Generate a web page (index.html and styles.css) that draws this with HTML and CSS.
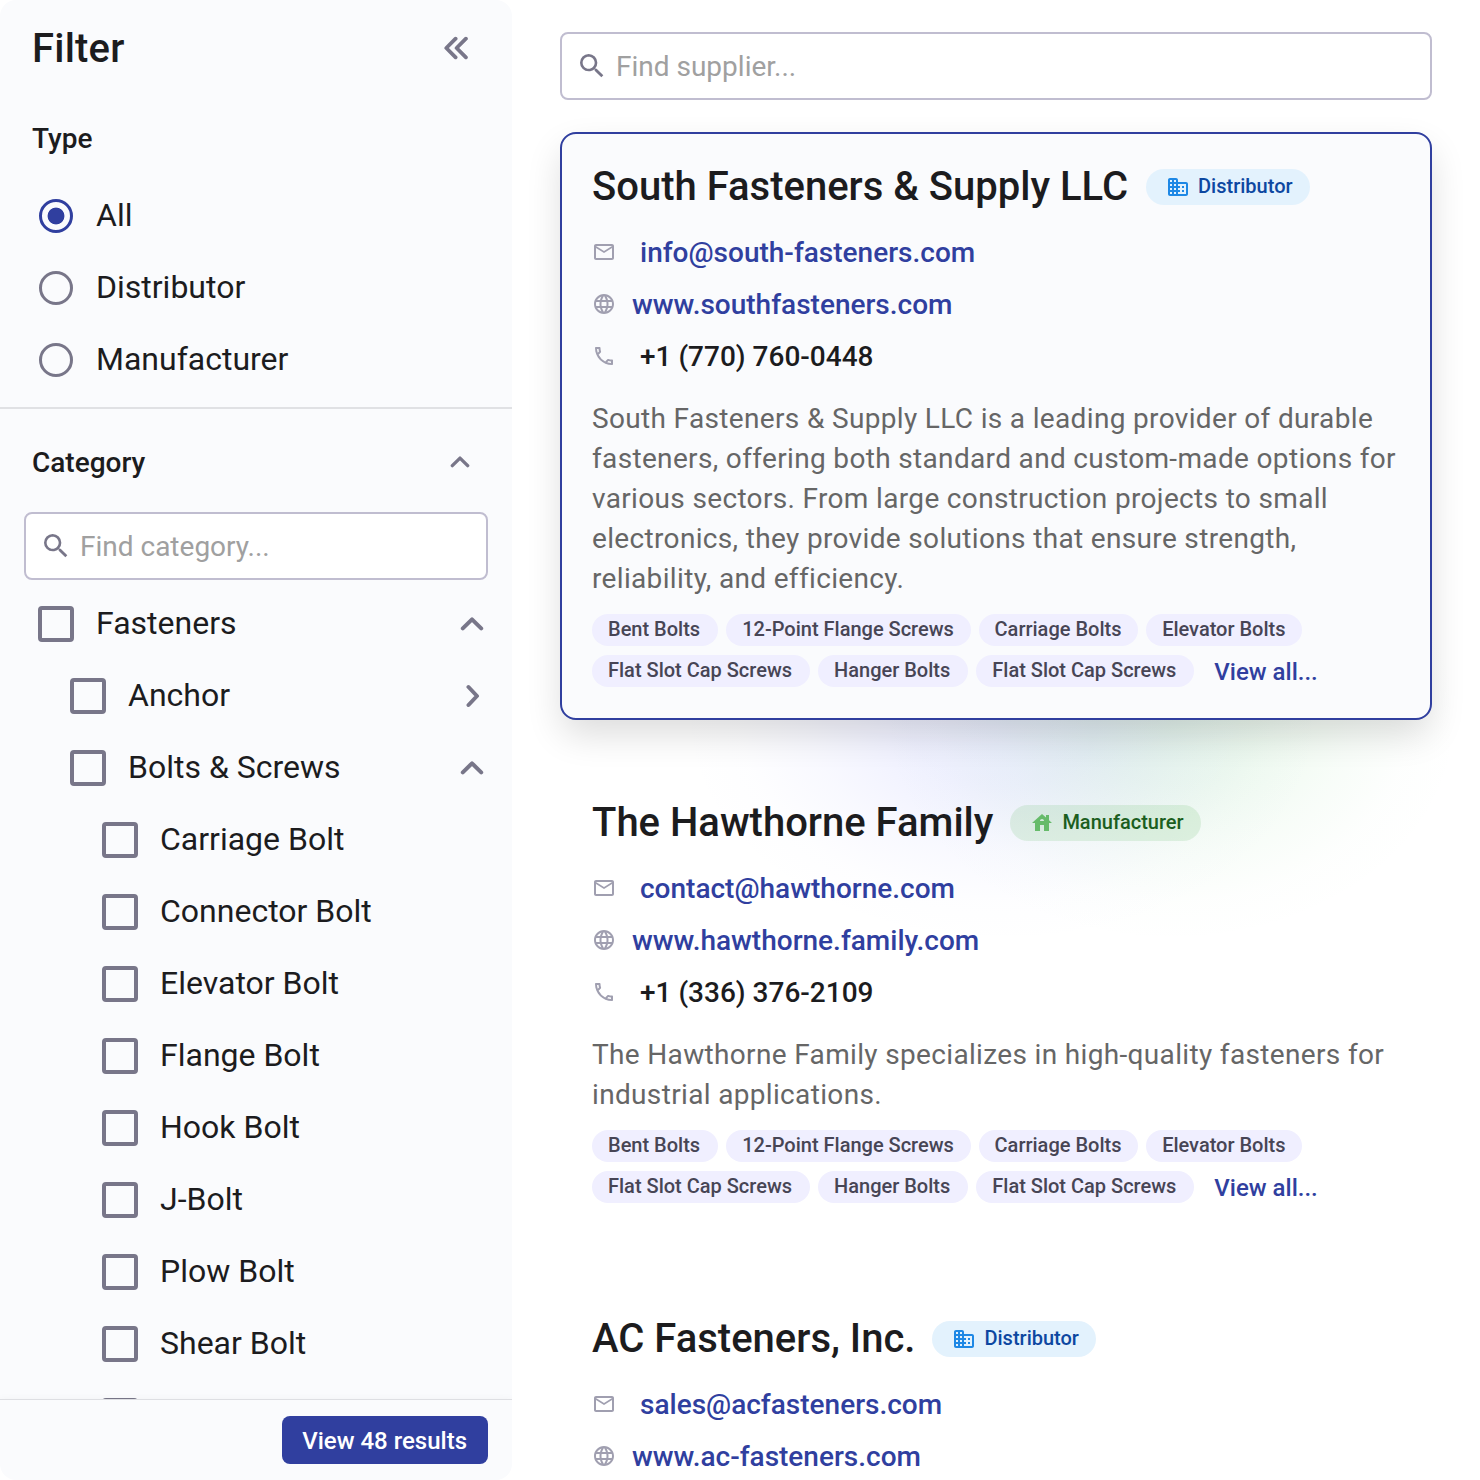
FILE: index.html
```html
<!DOCTYPE html>
<html lang="en">
<head>
    <meta charset="UTF-8">
    <meta name="viewport" content="width=device-width, initial-scale=1.0">
    <title>Suppliers</title>
    <link rel="stylesheet" href="styles.css">
</head>
<body>

<svg class="icon-defs" width="0" height="0">
    <symbol id="icon-search" viewBox="0 0 24 24"><path d="M15.5 14h-.79l-.28-.27A6.471 6.471 0 0 0 16 9.5 6.5 6.5 0 1 0 9.5 16c1.61 0 3.09-.59 4.23-1.57l.27.28v.79l5 4.99L20.49 19l-4.99-5zm-6 0C7.01 14 5 11.99 5 9.5S7.01 5 9.5 5 14 7.01 14 9.5 11.99 14 9.5 14z"/></symbol>
    <symbol id="icon-mail" viewBox="0 0 24 24"><path d="M22 6c0-1.1-.9-2-2-2H4c-1.1 0-2 .9-2 2v12c0 1.1.9 2 2 2h16c1.1 0 2-.9 2-2V6zm-2 0-8 5-8-5h16zm0 12H4V8l8 5 8-5v10z"/></symbol>
    <symbol id="icon-globe" viewBox="0 0 24 24"><path d="M11.99 2C6.47 2 2 6.48 2 12s4.47 10 9.99 10C17.52 22 22 17.52 22 12S17.52 2 11.99 2zm6.93 6h-2.95a15.65 15.65 0 0 0-1.38-3.56A8.03 8.03 0 0 1 18.92 8zM12 4.04c.83 1.2 1.48 2.53 1.91 3.96h-3.82c.43-1.43 1.08-2.76 1.91-3.96zM4.26 14C4.1 13.36 4 12.69 4 12s.1-1.36.26-2h3.38c-.08.66-.14 1.32-.14 2s.06 1.34.14 2H4.26zm.82 2h2.95c.32 1.25.78 2.45 1.38 3.56A7.987 7.987 0 0 1 5.08 16zm2.95-8H5.08a7.987 7.987 0 0 1 4.33-3.56A15.65 15.65 0 0 0 8.03 8zM12 19.96c-.83-1.2-1.48-2.53-1.91-3.96h3.82c-.43 1.43-1.08 2.76-1.91 3.96zM14.34 14H9.66c-.09-.66-.16-1.32-.16-2s.07-1.35.16-2h4.68c.09.65.16 1.32.16 2s-.07 1.34-.16 2zm.25 5.56c.6-1.11 1.06-2.31 1.38-3.56h2.95a8.03 8.03 0 0 1-4.33 3.56zM16.36 14c.08-.66.14-1.32.14-2s-.06-1.34-.14-2h3.38c.16.64.26 1.31.26 2s-.1 1.36-.26 2h-3.38z"/></symbol>
    <symbol id="icon-phone" viewBox="0 0 24 24"><path d="M6.54 5c.06.89.21 1.76.45 2.59l-1.2 1.2c-.41-1.2-.67-2.47-.76-3.79h1.51m9.86 12.02c.85.24 1.72.39 2.6.45v1.49c-1.32-.09-2.59-.35-3.8-.75l1.2-1.19M7.5 3H4c-.55 0-1 .45-1 1 0 9.39 7.61 17 17 17 .55 0 1-.45 1-1v-3.49c0-.55-.45-1-1-1-1.24 0-2.45-.2-3.57-.57a.84.84 0 0 0-.31-.05c-.26 0-.51.1-.71.29l-2.2 2.2a15.149 15.149 0 0 1-6.59-6.59l2.2-2.2c.28-.28.36-.67.25-1.02A11.36 11.36 0 0 1 8.5 4c0-.55-.45-1-1-1z"/></symbol>
    <symbol id="icon-building" viewBox="0 0 24 24"><path d="M12 7V5c0-1.1-.9-2-2-2H4c-1.1 0-2 .9-2 2v14c0 1.1.9 2 2 2h16c1.1 0 2-.9 2-2V9c0-1.1-.9-2-2-2h-8zM6 19H4v-2h2v2zm0-4H4v-2h2v2zm0-4H4V9h2v2zm0-4H4V5h2v2zm4 12H8v-2h2v2zm0-4H8v-2h2v2zm0-4H8V9h2v2zm0-4H8V5h2v2zm10 12h-8v-2h2v-2h-2v-2h2v-2h-2V9h8v10zm-2-8h-2v2h2v-2zm0 4h-2v2h2v-2z"/></symbol>
    <symbol id="icon-house" viewBox="0 0 24 24"><path d="M19 9.3V4h-3v2.6L12 3 2 12h3v8h5v-6h4v6h5v-8h3l-3-2.7zm-9 .7c0-1.1.9-2 2-2s2 .9 2 2h-4z"/></symbol>
    <symbol id="icon-up" viewBox="0 0 24 14"><path d="M2.8 11.4 12 2.3l9.2 9.1"/></symbol>
    <symbol id="icon-right" viewBox="0 0 14 24"><path d="M2.5 3 11 12l-8.5 9"/></symbol>
    <symbol id="icon-collapse" viewBox="0 0 26 24"><path d="M13.6 2.7 4.3 12l9.3 9.3M23.9 2.7 14.6 12l9.3 9.3"/></symbol>
</svg>

<div class="page">
    <aside class="sidebar">
        <div class="sidebar-header">
            <h1>Filter</h1>
            <svg class="line-icon collapse"><use href="#icon-collapse"/></svg>
        </div>

        <section class="type-section">
            <h2>Type</h2>
            <label class="option"><span class="radio checked"></span><span class="label">All</span></label>
            <label class="option"><span class="radio"></span><span class="label">Distributor</span></label>
            <label class="option"><span class="radio"></span><span class="label">Manufacturer</span></label>
        </section>

        <section class="category-section">
            <div class="category-header">
                <h2>Category</h2>
                <svg class="line-icon up small"><use href="#icon-up"/></svg>
            </div>
            <div class="search">
                <svg><use href="#icon-search"/></svg>
                <input type="text" placeholder="Find category...">
            </div>
            <div class="tree">
                <label class="option"><span class="checkbox"></span><span class="label">Fasteners</span><svg class="line-icon up"><use href="#icon-up"/></svg></label>
                <label class="option level-2"><span class="checkbox"></span><span class="label">Anchor</span><svg class="line-icon right"><use href="#icon-right"/></svg></label>
                <label class="option level-2"><span class="checkbox"></span><span class="label">Bolts &amp; Screws</span><svg class="line-icon up"><use href="#icon-up"/></svg></label>
                <label class="option level-3"><span class="checkbox"></span><span class="label">Carriage Bolt</span></label>
                <label class="option level-3"><span class="checkbox"></span><span class="label">Connector Bolt</span></label>
                <label class="option level-3"><span class="checkbox"></span><span class="label">Elevator Bolt</span></label>
                <label class="option level-3"><span class="checkbox"></span><span class="label">Flange Bolt</span></label>
                <label class="option level-3"><span class="checkbox"></span><span class="label">Hook Bolt</span></label>
                <label class="option level-3"><span class="checkbox"></span><span class="label">J-Bolt</span></label>
                <label class="option level-3"><span class="checkbox"></span><span class="label">Plow Bolt</span></label>
                <label class="option level-3"><span class="checkbox"></span><span class="label">Shear Bolt</span></label>
                <label class="option level-3"><span class="checkbox"></span></label>
            </div>
        </section>

        <div class="sidebar-footer">
            <button class="btn">View 48 results</button>
        </div>
    </aside>

    <main class="results">
        <div class="search">
            <svg><use href="#icon-search"/></svg>
            <input type="text" placeholder="Find supplier...">
        </div>

        <div class="supplier-list">
            <article class="supplier selected">
                <div class="supplier-title">
                    <h3>South Fasteners &amp; Supply LLC</h3>
                    <span class="badge distributor"><svg><use href="#icon-building"/></svg><span>Distributor</span></span>
                </div>
                <ul class="contacts">
                    <li><svg><use href="#icon-mail"/></svg><a href="#">info@south-fasteners.com</a></li>
                    <li class="web"><svg><use href="#icon-globe"/></svg><a href="#">www.southfasteners.com</a></li>
                    <li><svg><use href="#icon-phone"/></svg>+1 (770) 760-0448</li>
                </ul>
                <p class="description">South Fasteners &amp; Supply LLC is a leading provider of durable fasteners, offering both standard and custom-made options for various sectors. From large construction projects to small electronics, they provide solutions that ensure strength, reliability, and efficiency.</p>
                <div class="tags">
                    <span class="tag">Bent Bolts</span>
                    <span class="tag">12-Point Flange Screws</span>
                    <span class="tag">Carriage Bolts</span>
                    <span class="tag">Elevator Bolts</span>
                    <span class="tag">Flat Slot Cap Screws</span>
                    <span class="tag">Hanger Bolts</span>
                    <span class="tag">Flat Slot Cap Screws</span>
                    <a class="view-all" href="#">View all...</a>
                </div>
            </article>

            <article class="supplier">
                <div class="supplier-title">
                    <h3>The Hawthorne Family</h3>
                    <span class="badge manufacturer"><svg><use href="#icon-house"/></svg><span>Manufacturer</span></span>
                </div>
                <ul class="contacts">
                    <li><svg><use href="#icon-mail"/></svg><a href="#">contact@hawthorne.com</a></li>
                    <li class="web"><svg><use href="#icon-globe"/></svg><a href="#">www.hawthorne.family.com</a></li>
                    <li><svg><use href="#icon-phone"/></svg>+1 (336) 376-2109</li>
                </ul>
                <p class="description">The Hawthorne Family specializes in high-quality fasteners for industrial applications.</p>
                <div class="tags">
                    <span class="tag">Bent Bolts</span>
                    <span class="tag">12-Point Flange Screws</span>
                    <span class="tag">Carriage Bolts</span>
                    <span class="tag">Elevator Bolts</span>
                    <span class="tag">Flat Slot Cap Screws</span>
                    <span class="tag">Hanger Bolts</span>
                    <span class="tag">Flat Slot Cap Screws</span>
                    <a class="view-all" href="#">View all...</a>
                </div>
            </article>

            <article class="supplier">
                <div class="supplier-title">
                    <h3>AC Fasteners, Inc.</h3>
                    <span class="badge distributor"><svg><use href="#icon-building"/></svg><span>Distributor</span></span>
                </div>
                <ul class="contacts">
                    <li><svg><use href="#icon-mail"/></svg><a href="#">sales@acfasteners.com</a></li>
                    <li class="web"><svg><use href="#icon-globe"/></svg><a href="#">www.ac-fasteners.com</a></li>
                </ul>
            </article>
        </div>
    </main>
</div>

</body>
</html>
```

FILE: styles.css
```css
* {
    box-sizing: border-box;
}
body {
    font-family: Roboto, sans-serif;
    margin: 0;
    background: #fff;
    color: #1c1c1e;
}
h1, h2, h3, p, ul {
    margin: 0;
    padding: 0;
    font-weight: 500;
}
a {
    color: #303f9f;
    text-decoration: none;
}
.icon-defs {
    display: none;
}
.page {
    display: flex;
    height: 1480px;
    overflow: hidden;
}
.line-icon {
    fill: none;
    stroke: #787689;
    stroke-width: 4;
    stroke-linecap: round;
    stroke-linejoin: round;
}

/* Sidebar */
.sidebar {
    width: 512px;
    flex-shrink: 0;
    display: flex;
    flex-direction: column;
    background: #fafbfd;
    border-radius: 16px;
    overflow: hidden;
}
.sidebar-header {
    display: flex;
    justify-content: space-between;
    align-items: center;
    height: 96px;
    padding: 0 44px 0 32px;
}
h1 {
    padding-top: 2px;
    font-size: 40px;
    line-height: 48px;
    letter-spacing: 0.2px;
}
h2 {
    font-size: 28px;
    line-height: 40px;
}
.collapse {
    width: 26px;
    height: 24px;
    stroke-width: 3.8;
}
.type-section {
    padding-top: 23px;
    height: 313px;
    flex-shrink: 0;
    border-bottom: 2px solid #e0e1e4;
}
.type-section h2 {
    padding-left: 32px;
    margin-bottom: 21px;
}
.option {
    display: flex;
    align-items: center;
    height: 72px;
    padding: 0 28px 0 38px;
    font-size: 32px;
}
.label {
    padding-bottom: 2px;
}
.option .line-icon {
    margin-left: auto;
}
.level-2 {
    padding-left: 70px;
}
.level-3 {
    padding-left: 102px;
}
.radio {
    width: 34px;
    height: 34px;
    margin: 0 23px 0 1px;
    border: 3.4px solid #787689;
    border-radius: 50%;
}
.radio.checked {
    border-color: #303f9f;
    background: radial-gradient(circle, #303f9f 8px, transparent 8.8px);
}
.checkbox {
    width: 36px;
    height: 36px;
    margin-right: 22px;
    border: 4px solid #787689;
    border-radius: 4px;
}
.up {
    width: 24px;
    height: 14px;
    margin-bottom: 1px;
}
.up.small {
    width: 20px;
    height: 12px;
    margin-bottom: 2px;
}
.right {
    width: 14px;
    height: 24px;
    margin-right: 4px;
}
.category-section {
    flex: 1;
    min-height: 0;
    overflow: hidden;
}
.category-header {
    display: flex;
    justify-content: space-between;
    align-items: center;
    height: 103px;
    padding: 4px 42px 0 32px;
}
.search {
    display: flex;
    align-items: center;
    gap: 8px;
    height: 68px;
    padding: 0 14px;
    background: #fff;
    border: 2px solid #c0bdd0;
    border-radius: 8px;
}
.search svg {
    width: 32px;
    height: 32px;
    fill: #787689;
}
.search input {
    flex: 1;
    min-width: 0;
    padding: 2px 0 0;
    border: 0;
    outline: 0;
    background: none;
    font: 28px/40px Roboto, sans-serif;
}
.search input::placeholder {
    color: #a0a0a0;
}
.category-section .search {
    margin: 0 24px 8px;
}
.sidebar-footer {
    display: flex;
    justify-content: flex-end;
    align-items: center;
    height: 81px;
    padding: 0 24px;
    border-top: 1px solid #dedfe3;
    box-shadow: 0 0 8px rgba(0, 0, 0, 0.04);
}
.btn {
    height: 48px;
    padding: 2px 21px 0 20px;
    border: 0;
    border-radius: 8px;
    background: #303f9f;
    color: #fff;
    font: 500 24px/46px Roboto, sans-serif;
}

/* Results */
.results {
    flex: 1;
    padding: 32px 48px;
}
.supplier-list {
    display: flex;
    flex-direction: column;
    gap: 48px;
    margin-top: 32px;
}
.supplier {
    padding: 31px 32px 33px;
}
.supplier.selected {
    position: relative;
    padding: 29px 30px 31px;
    background: #fafbfd;
    border: 2px solid #303f9f;
    border-radius: 16px;
    box-shadow: 0 16px 36px -2px rgba(0, 0, 0, 0.14);
}
/* soft colour glow under the selected card */
.supplier.selected::after {
    content: "";
    position: absolute;
    z-index: -1;
    left: 120px;
    right: -20px;
    bottom: -230px;
    height: 440px;
    background:
        radial-gradient(ellipse 320px 225px at 320px 210px, rgba(125, 135, 255, 0.15), rgba(125, 135, 255, 0.12) 30%, rgba(125, 135, 255, 0.05) 60%, rgba(125, 135, 255, 0.012) 82%, transparent),
        radial-gradient(ellipse 290px 225px at 490px 210px, rgba(110, 210, 120, 0.16), rgba(110, 210, 120, 0.12) 30%, rgba(110, 210, 120, 0.05) 60%, rgba(110, 210, 120, 0.012) 82%, transparent);
}
.supplier-title {
    display: flex;
    align-items: center;
    gap: 17px;
    height: 48px;
}
.selected .supplier-title {
    gap: 18px;
}
h3 {
    font-size: 40px;
    line-height: 48px;
}
.badge {
    display: flex;
    align-items: center;
    gap: 8px;
    height: 36px;
    padding: 0 17px 0 20px;
    border-radius: 18px;
    font-size: 20px;
    font-weight: 500;
}
.badge span {
    padding-bottom: 2px;
}
.badge svg {
    width: 24px;
    height: 24px;
}
.distributor {
    background: #e3f2fd;
    color: #0d47a1;
    fill: #1e88e5;
}
.manufacturer {
    background: rgba(76, 175, 80, 0.14);
    color: #1b5e20;
    fill: #66bb6a;
}
.contacts {
    margin-top: 15px;
    list-style: none;
    font-size: 28px;
}
.contacts li {
    display: flex;
    align-items: center;
    gap: 24px;
    height: 52px;
}
.contacts .web {
    gap: 16px;
}
.contacts svg {
    width: 24px;
    height: 24px;
    fill: #a09fb0;
}
.description {
    margin-top: 17px;
    font-size: 28px;
    line-height: 40px;
    font-weight: 400;
    letter-spacing: 0.34px;
    color: #666;
}
.tags {
    display: flex;
    flex-wrap: wrap;
    gap: 9px 8px;
    margin-top: 15px;
}
.tag {
    height: 32px;
    padding: 0 16.7px 0 16px;
    border-radius: 16px;
    background: #f0efff;
    color: #474555;
    font-size: 20px;
    line-height: 31px;
    font-weight: 500;
}
.tag:first-child, .tag:nth-child(n+5) {
    padding-right: 18px;
}
.view-all {
    margin-left: 12px;
    font-size: 24px;
    line-height: 34px;
    height: 32px;
    font-weight: 500;
}
```
